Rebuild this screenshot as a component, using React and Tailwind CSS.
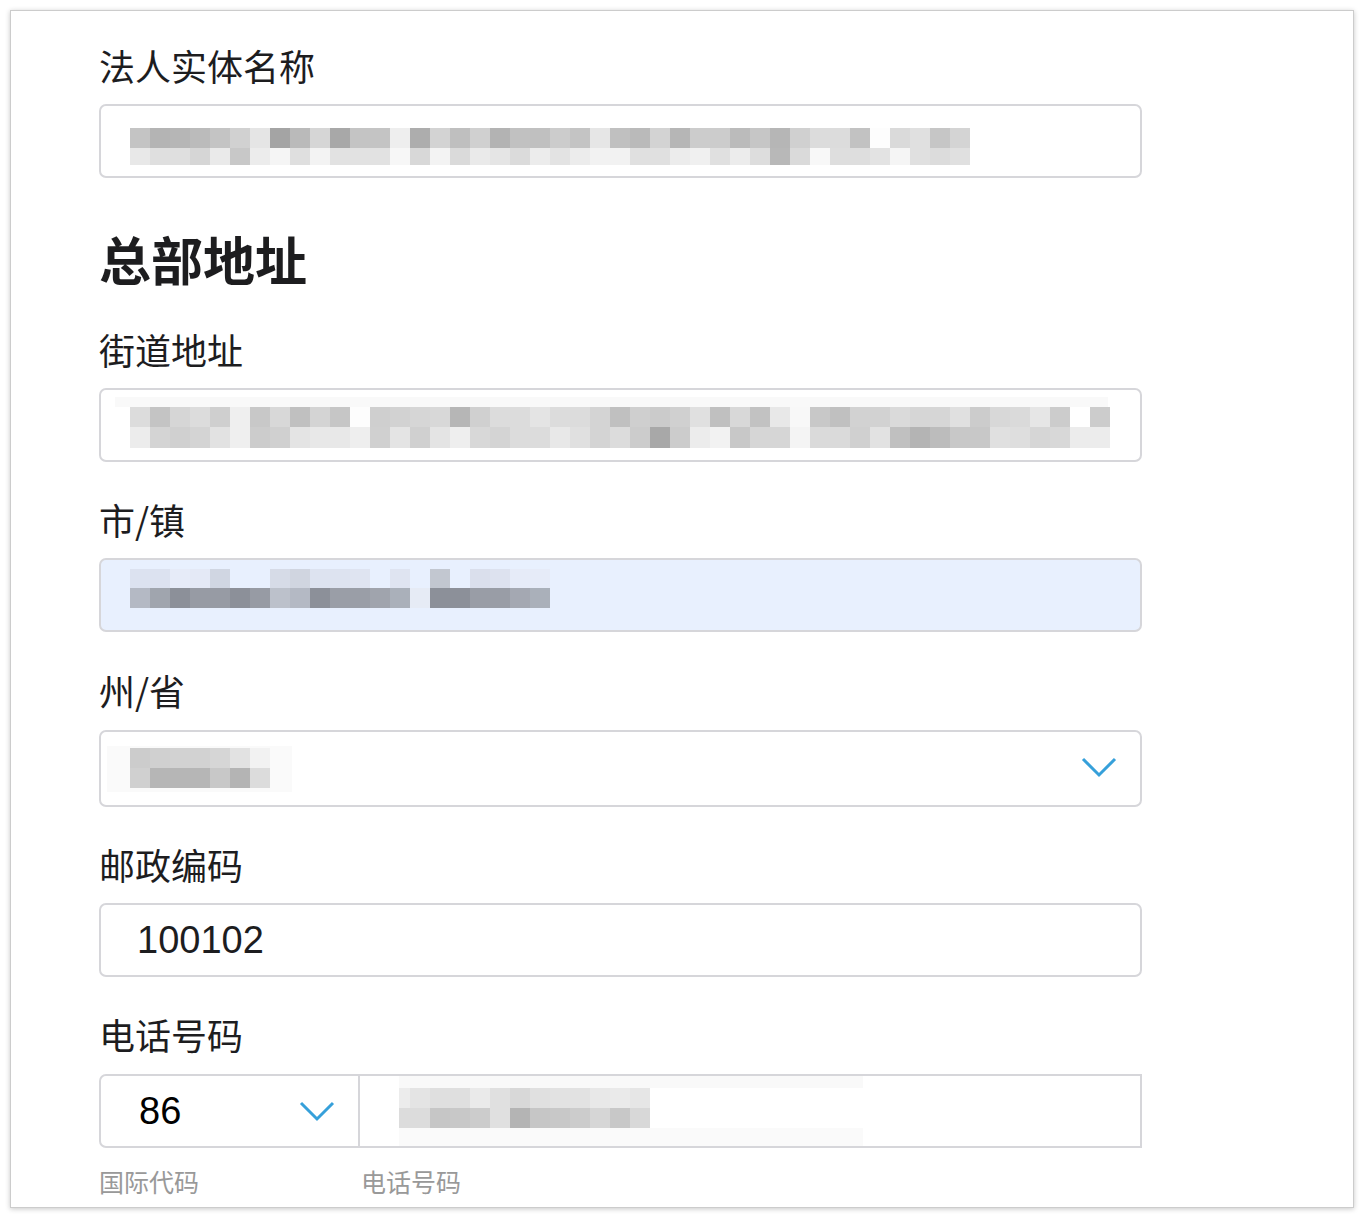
import React from 'react';

const hex = (c) => '#' + (c.length === 2 ? c + c + c : c);

const Mosaic = ({ rows, first }) => (
    <div className="flex flex-col">
        {rows.map((row, ri) => (
            <div key={ri} className={`flex ${row.h}`}>
                {row.c.map((c, i) => (
                    <div key={i} style={{ width: i === 0 && first ? first : 20, background: hex(c) }} />
                ))}
            </div>
        ))}
    </div>
);

const entityRows = [
    { h: 'h-[20px]', c: ['c4','b4','b6','bb','c4','d1','e5','a4','ba','d6','a8','c4','c4','ee','ad','d3','bf','d0','b3','c1','c0','cc','c4','e6','c0','ba','d3','b6','cc','cc','bb','c6','b6','d0','dc','dc','c2','fd','da','e0','c6','d4'] },
    { h: 'h-[17px]', c: ['e8','df','df','d6','ea','c8','ec','f5','df','f3','e2','e2','e2','f7','d8','f3','da','ea','e5','db','ec','e3','ec','f2','f2','e0','e0','ec','f0','e0','ec','dd','b8','da','f8','de','de','e3','f5','e0','dc','e0'] },
];

const streetRows = [
    { h: 'h-[20px]', c: ['dc','c4','d6','dc','cf','ef','c8','d8','c0','d4','c6','fd','cf','d2','d6','d8','b6','d0','dc','dc','e4','dc','dc','d4','c0','cf','cb','d0','e0','c0','d8','c2','e8','f8','c8','c0','d2','d2','da','d6','d6','e0','cc','d8','da','e6','cc','ff','cc'] },
    { h: 'h-[21px]', c: ['ec','d4','d0','d4','e2','ef','cc','d0','e4','e8','e8','ee','d0','e4','d0','e4','ee','d8','d4','dc','dc','e8','e0','d4','dc','cc','a8','cc','ec','f2','c8','d6','d6','f4','da','da','d0','e2','c0','b4','bc','c8','c8','e0','de','d6','d8','ec','ec'] },
];

const cityRows = [
    { h: 'h-[19px]', c: ['dce2f0','dce2f0','e6ebf8','e4e9f6','d0d6e2','e8f0fe','e8f0fe','d6dbe7','d0d5e0','dde3f0','dde3f0','dfe4f1','e8f0fe','dfe4f1','e8f0fe','c2c7d0','e8f0fe','dadfec','dde2ef','e6ebf8','e6ebf8'] },
    { h: 'h-[20px]', c: ['b4b9c4','a0a5ae','8c9099','979ba4','979ba4','8c9099','979ba4','bcc1cb','b4b9c4','8c9099','9a9ea7','9a9ea7','a0a4ad','aab0ba','e6ebf5','8c9099','8c9099','999da6','999da6','a4a8b2','aab0ba'] },
];

const stateRows = [
    { h: 'h-[20px]', c: ['cc','d0','d2','d2','d6','e2','f2'] },
    { h: 'h-[20px]', c: ['d0','b6','b6','b6','c8','b4','dc'] },
];

const phoneRows = [
    { h: 'h-[20px]', c: ['ec','e4','df','df','ea','e0','d8','e0','e2','e2','e8','ea','e6'] },
    { h: 'h-[20px]', c: ['dc','dc','c6','c8','cc','e0','b4','c6','c8','cc','d6','c8','d8'] },
];

const Chevron = () => (
    <svg width="36" height="22" viewBox="0 0 36 22" fill="none">
        <polyline points="2,3 18,19 34,3" stroke="#36a0da" strokeWidth="3" />
    </svg>
);

const Label = ({ children, className = 'mt-[29px] mb-[11px]' }) => (
    <div className={`h-[56px] text-[36px] leading-[56px] text-[#1d1d1f] ${className}`}>{children}</div>
);

const App = () => {
    return (
        <div className="min-h-screen bg-white p-[10px] font-['Noto_Sans_CJK_SC',sans-serif]">
            <div className="h-[1198px] border border-[#cccccc] bg-white pl-[88px] pt-[26px] shadow-[0_1px_5px_rgba(0,0,0,0.22)]">
                <div className="w-[1043px]">
                    <Label className="mb-[11px]">法人实体名称</Label>
                    <div className="h-[74px] rounded-[7px] border-2 border-[#d6d6da] pl-[29px] pt-[22px]">
                        <Mosaic rows={entityRows} />
                    </div>

                    <h2 className="mt-[50px] h-[62px] text-[52px] font-bold leading-[62px] text-[#1d1d1f]">总部地址</h2>

                    <Label className="mt-[31px] mb-[11px]">街道地址</Label>
                    <div className="h-[74px] rounded-[7px] border-2 border-[#d6d6da] pl-[14px] pt-[7px]">
                        <div className="h-[10px] w-[993px] bg-[#f9f9f9]"></div>
                        <div className="pl-[15px]">
                            <Mosaic rows={streetRows} />
                        </div>
                    </div>

                    <Label>市/镇</Label>
                    <div className="h-[74px] rounded-[7px] border-2 border-[#d6d6da] bg-[#e8f0fe] pl-[29px] pt-[9px]">
                        <Mosaic rows={cityRows} />
                    </div>

                    <Label className="mt-[30px] mb-[12px]">州/省</Label>
                    <div className="flex h-[77px] items-start justify-between rounded-[7px] border-2 border-[#d6d6da] pl-[6px] pr-[23px]">
                        <div className="mt-[14px] h-[46px] w-[185px] bg-[#fafafa] pl-[23px] pt-[2px]">
                            <Mosaic rows={stateRows} />
                        </div>
                        <div className="mt-[24px]">
                            <Chevron />
                        </div>
                    </div>

                    <Label>邮政编码</Label>
                    <div className="flex h-[74px] items-center rounded-[7px] border-2 border-[#d6d6da] pl-[36px] font-['Liberation_Sans',sans-serif] text-[38px] text-[#1d1d1f]">
                        100102
                    </div>

                    <Label className="mt-[29px] mb-[12px]">电话号码</Label>
                    <div className="flex h-[74px]">
                        <div className="flex w-[261px] items-center justify-between rounded-l-[7px] border-2 border-[#d6d6da] pl-[38px] pr-[23px] font-['Liberation_Sans',sans-serif] text-[38px] text-black">
                            <span>86</span>
                            <Chevron />
                        </div>
                        <div className="flex-1 border-y-2 border-r-2 border-[#d6d6da] pl-[39px]">
                            <div className="h-[12px] w-[464px] bg-[#f9f9f9]"></div>
                            <Mosaic rows={phoneRows} first={11} />
                            <div className="h-[18px] w-[464px] bg-[#fafafa]"></div>
                        </div>
                    </div>
                    <div className="mt-[16px] flex h-[34px] text-[25px] leading-[34px] text-[#999999]">
                        <div className="w-[262px]">国际代码</div>
                        <div>电话号码</div>
                    </div>
                </div>
            </div>
        </div>
    );
};

export default App;
